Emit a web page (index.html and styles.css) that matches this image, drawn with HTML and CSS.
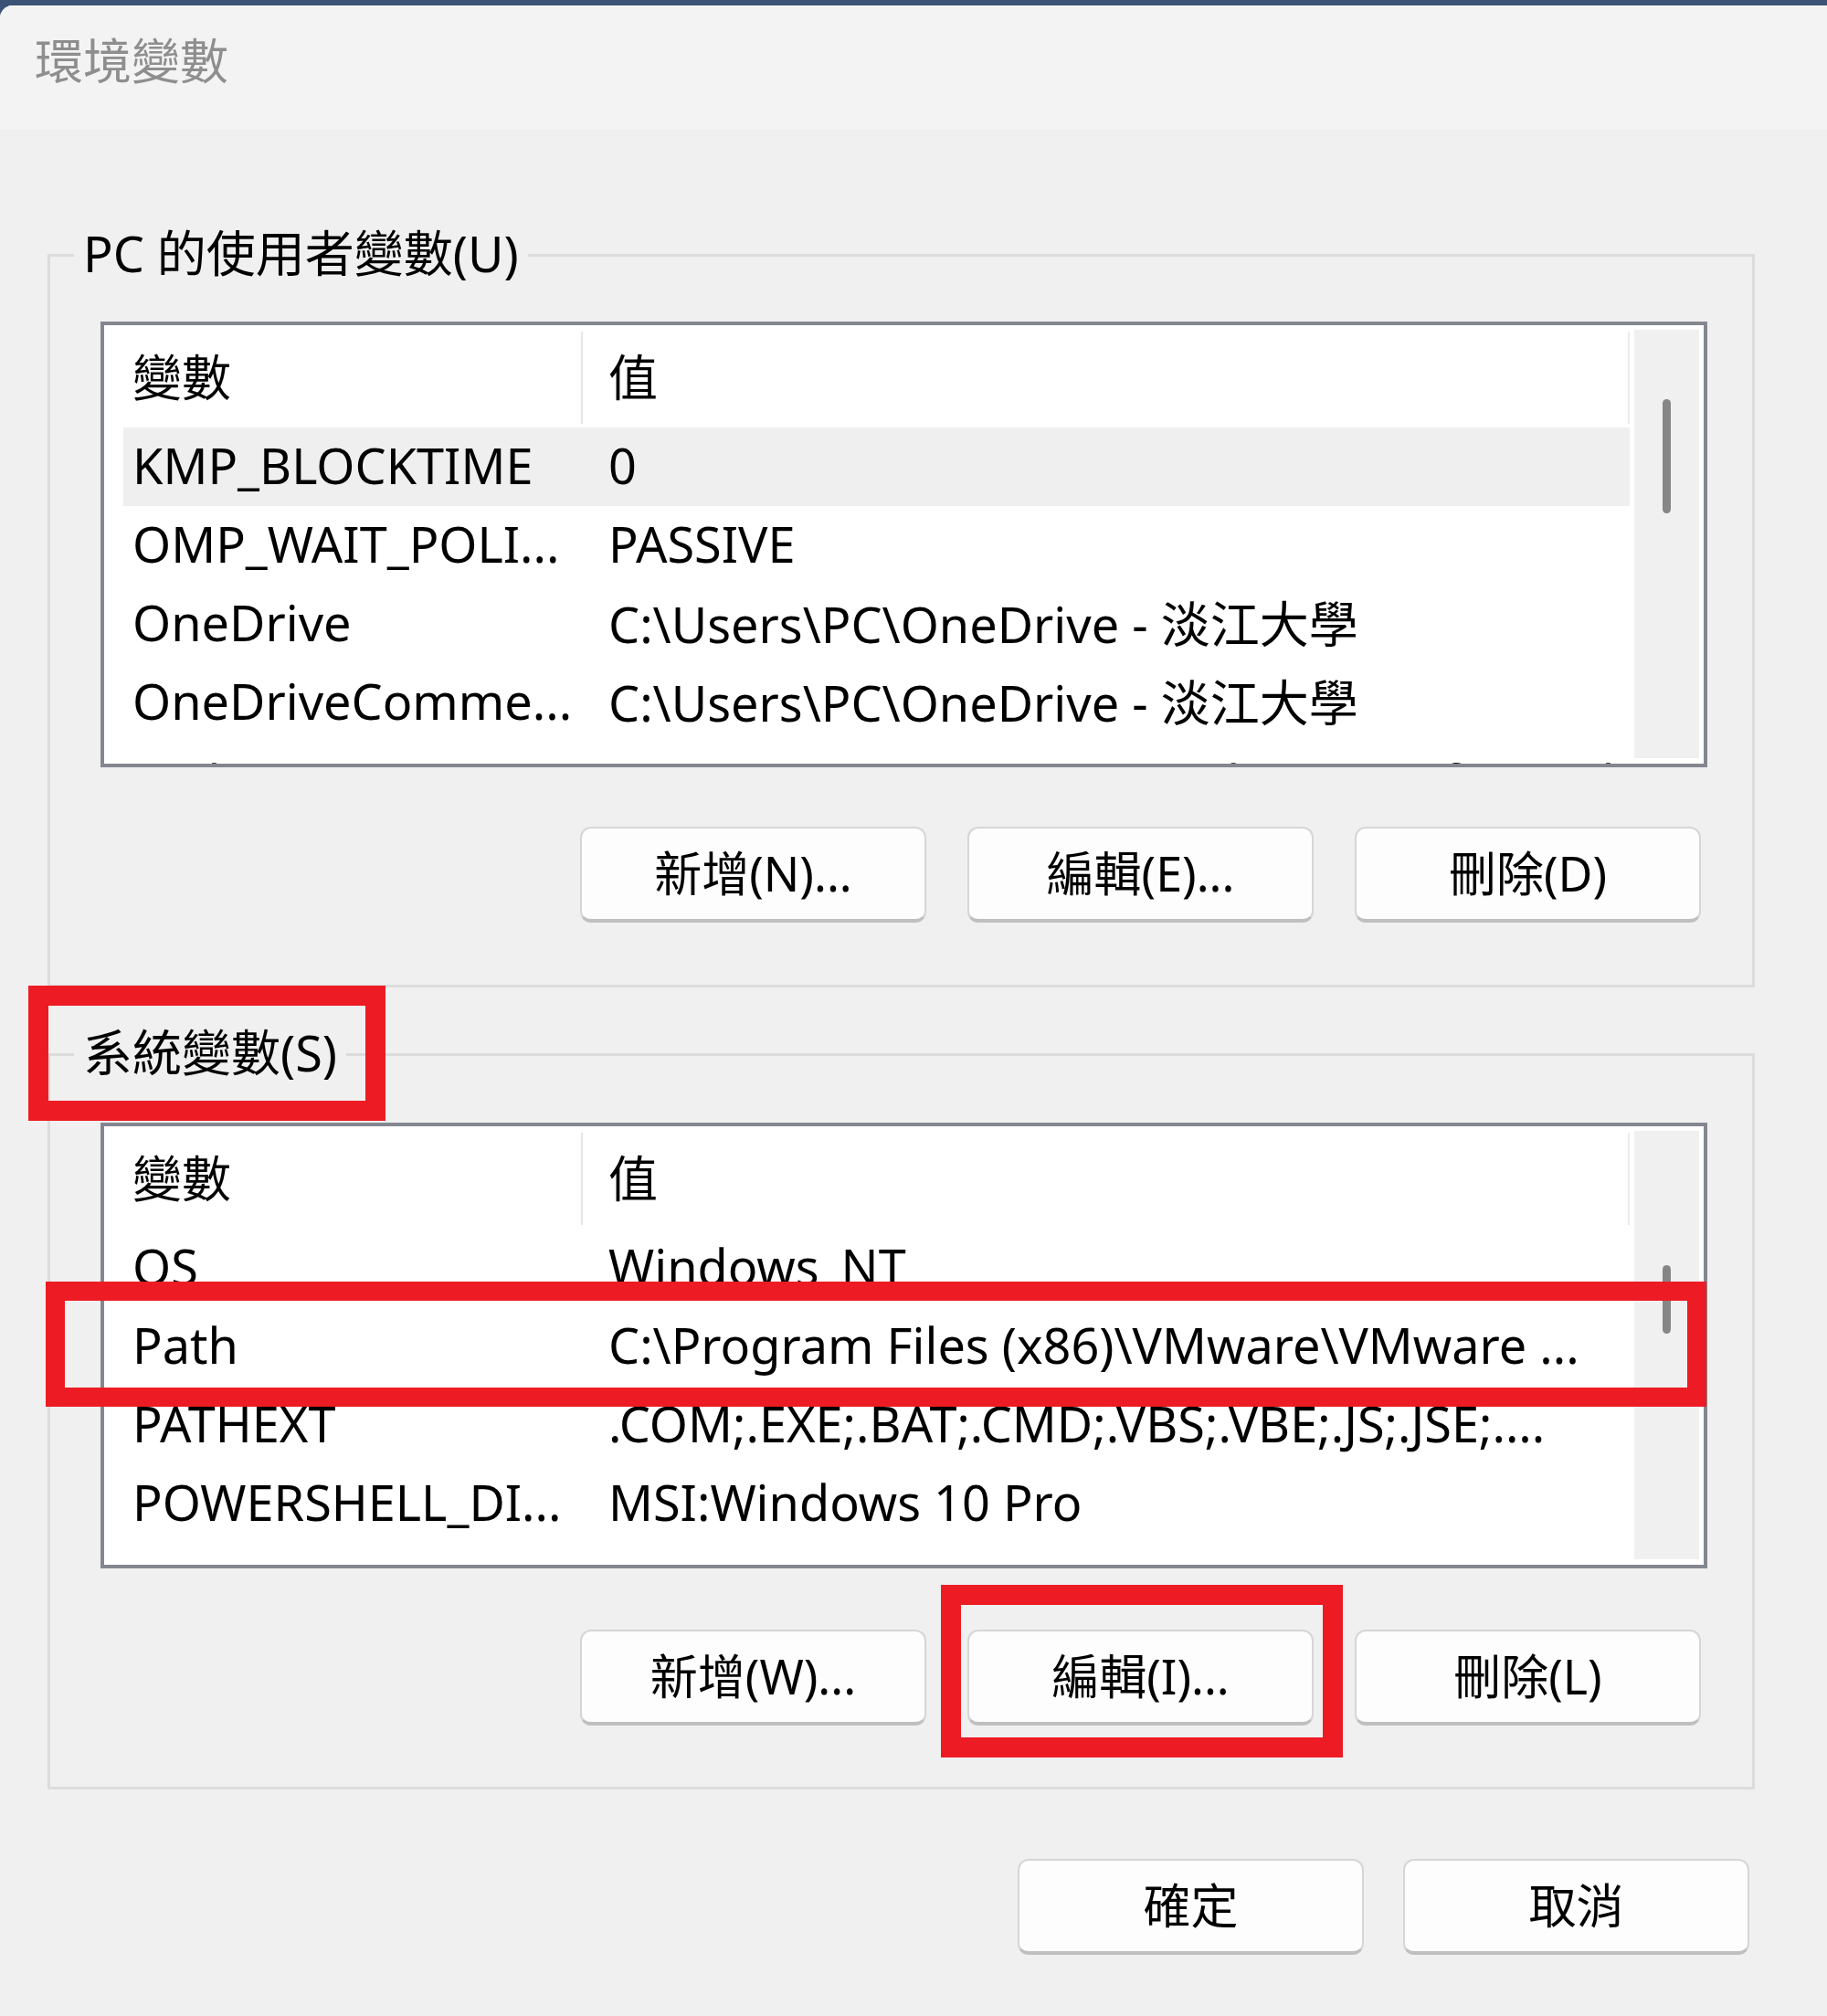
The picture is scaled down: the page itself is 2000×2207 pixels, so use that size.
FILE: index.html
```html
<!DOCTYPE html>
<html lang="zh-Hant">
<head>
<meta charset="utf-8">
<title>環境變數</title>
<link rel="stylesheet" href="styles.css">
</head>
<body>
<div class="window">
  <div class="titlebar"><span class="title">環境變數</span></div>
  <div class="content">
    <fieldset class="group group-user">
      <legend>PC 的使用者變數(U)</legend>
      <div class="group-body">
        <div class="listbox">
          <div class="list-body">
            <div class="list-head"><div class="cell c1">變數</div><div class="cell c2">值</div></div>
            <div class="row sel"><div class="cell c1">KMP_BLOCKTIME</div><div class="cell c2">0</div></div>
            <div class="row"><div class="cell c1">OMP_WAIT_POLI...</div><div class="cell c2">PASSIVE</div></div>
            <div class="row"><div class="cell c1">OneDrive</div><div class="cell c2">C:\Users\PC\OneDrive - 淡江大學</div></div>
            <div class="row"><div class="cell c1">OneDriveComme...</div><div class="cell c2">C:\Users\PC\OneDrive - 淡江大學</div></div>
            <div class="row peek"><div class="cell c1">Path</div><div class="cell c2">C:\Users\PC\AppData\Local\Microsoft\WindowsApps;</div></div>
          </div>
          <div class="scrollbar"><div class="thumb thumb-user"></div></div>
        </div>
        <div class="btn-row">
          <button class="btn">新增(N)...</button>
          <button class="btn">編輯(E)...</button>
          <button class="btn">刪除(D)</button>
        </div>
      </div>
    </fieldset>

    <fieldset class="group group-sys">
      <legend>系統變數(S)</legend>
      <div class="group-body">
        <div class="listbox">
          <div class="list-body">
            <div class="list-head"><div class="cell c1">變數</div><div class="cell c2">值</div></div>
            <div class="row"><div class="cell c1">OS</div><div class="cell c2">Windows_NT</div></div>
            <div class="row"><div class="cell c1">Path</div><div class="cell c2">C:\Program Files (x86)\VMware\VMware ...</div></div>
            <div class="row"><div class="cell c1">PATHEXT</div><div class="cell c2">.COM;.EXE;.BAT;.CMD;.VBS;.VBE;.JS;.JSE;....</div></div>
            <div class="row"><div class="cell c1">POWERSHELL_DI...</div><div class="cell c2">MSI:Windows 10 Pro</div></div>
          </div>
          <div class="scrollbar"><div class="thumb thumb-sys"></div></div>
        </div>
        <div class="btn-row">
          <button class="btn">新增(W)...</button>
          <button class="btn">編輯(I)...</button>
          <button class="btn">刪除(L)</button>
        </div>
      </div>
    </fieldset>

    <div class="dialog-buttons">
      <button class="btn">確定</button>
      <button class="btn">取消</button>
    </div>
  </div>
</div>

<div class="mark mark-legend"></div>
<div class="mark mark-row"></div>
<div class="mark mark-btn"></div>
</body>
</html>
```

FILE: styles.css
```css
html, body {
  margin: 0;
  padding: 0;
}

body {
  position: relative;
  width: 2000px;
  height: 2207px;
  overflow: hidden;
  background: #3d5376;
  font-family: "Noto Sans", "Noto Sans CJK TC", sans-serif;
  color: #000;
}

.window {
  margin-top: 6px;
  min-height: 2201px;
  background: #f0f0f0;
  border-top-left-radius: 14px;
  overflow: hidden;
}

.titlebar {
  height: 135px;
  box-sizing: border-box;
  padding: 30px 0 0 38px;
  background: #f3f3f3;
  border-top: 1px solid #fbfbfb;
}

.title {
  font-size: 53px;
  line-height: 60px;
  color: #8e8e8e;
}

.content {
  padding: 106px 79px 0 52px;
}

.group {
  margin: 0;
  padding: 0;
  border: 3px solid #dcdcdc;
  min-width: 0;
}

.group-sys {
  margin-top: 41px;
}

.group-body {
  padding: 0 49px 68px 55px;
}

.group-sys .group-body {
  padding-bottom: 67px;
}

legend {
  margin-left: 26px;
  padding: 0 10px 4px;
  font-size: 54px;
  line-height: 60px;
  white-space: nowrap;
}

.listbox {
  margin-top: 41px;
  height: 488px;
  box-sizing: border-box;
  border: 4px solid #83878f;
  background: #fff;
  display: flex;
}

.group-sys .listbox {
  margin-top: 43px;
}

.list-body {
  flex: 1;
  min-width: 0;
  padding: 0 5px 0 21px;
  overflow: hidden;
  font-size: 54px;
}

.list-head {
  display: flex;
  height: 112px;
  box-sizing: border-box;
  padding: 7px 0 4px;
}

.cell {
  box-sizing: border-box;
  white-space: nowrap;
  overflow: hidden;
  display: flex;
  align-items: center;
  padding-bottom: 5px;
}

.list-head .cell {
  padding-bottom: 6px;
}

.row.peek .cell {
  padding-bottom: 0;
  padding-top: 2px;
}

.c1 {
  width: 503px;
  flex: none;
  padding-left: 10px;
}

.c2 {
  flex: 1;
  padding-left: 28px;
}

.list-head .c1 {
  border-right: 2px solid #e6e6e6;
}

.list-head .c2 {
  border-right: 2px solid #ececec;
}

.row {
  display: flex;
  height: 86px;
}

.row.sel {
  background: #efefef;
}

.scrollbar {
  width: 71px;
  flex: none;
  margin: 5px 5px 6px 0;
  background: #f0f0f0;
  display: flex;
  flex-direction: column;
}

.thumb {
  width: 9px;
  margin-left: 31px;
  border-radius: 5px;
  background: #868686;
}

.thumb-user {
  margin-top: 76px;
  height: 125px;
}

.thumb-sys {
  margin-top: 147px;
  height: 75px;
}

.btn-row {
  display: flex;
  justify-content: flex-end;
  gap: 45px;
  margin: 65px 7px 0 0;
}

.group-sys .btn-row {
  margin-top: 67px;
}

.btn {
  width: 379px;
  height: 105px;
  box-sizing: border-box;
  padding: 0 0 6px;
  border: 2px solid #d6d6d6;
  border-bottom: 4px solid #bfbfbf;
  border-radius: 12px;
  background: #fdfdfd;
  font-family: inherit;
  font-size: 52px;
  color: #000;
}

.dialog-buttons {
  display: flex;
  justify-content: flex-end;
  gap: 43px;
  margin: 76px 6px 0 0;
}

.mark {
  position: absolute;
  box-sizing: border-box;
  border: 22px solid #ed1c24;
}

.mark-legend {
  left: 31px;
  top: 1079px;
  width: 391px;
  height: 148px;
}

.mark-row {
  left: 50px;
  top: 1403px;
  width: 1818px;
  height: 137px;
  border-width: 21px;
}

.mark-btn {
  left: 1030px;
  top: 1735px;
  width: 440px;
  height: 189px;
}
```
